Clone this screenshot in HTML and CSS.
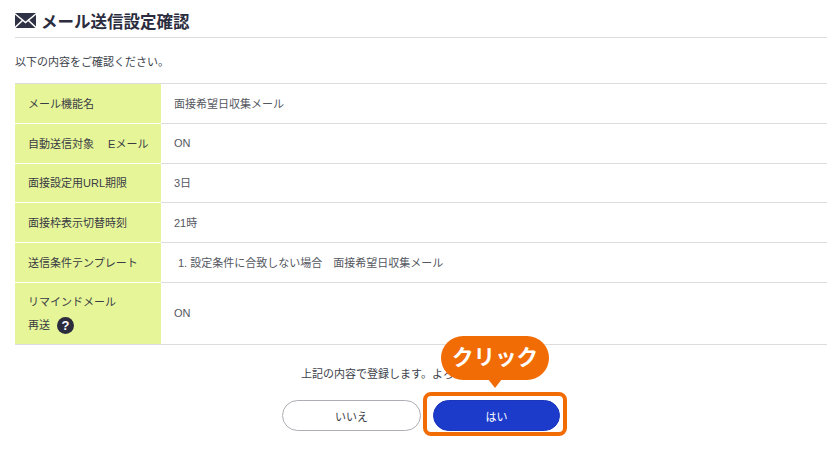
FILE: index.html
```html
<!DOCTYPE html>
<html lang="ja">
<head>
<meta charset="utf-8">
<title>メール送信設定確認</title>
<link rel="stylesheet" href="styles.css">
</head>
<body>
<main class="page">
  <h1 class="title">
    <svg class="mail" viewBox="0 0 21 15" aria-hidden="true"><path d="M0 0h21L10.5 8.6z"/><path d="M0 1.8v11.6l6.6-6.2z"/><path d="M21 1.8v11.6l-6.6-6.2z"/><path d="M7.8 8.2 10.5 10.5l2.7-2.3L20.4 15H.6z"/></svg>
    <span>メール送信設定確認</span>
  </h1>
  <p class="lead">以下の内容をご確認ください。</p>
  <table class="info">
    <tr class="r40"><th>メール機能名</th><td>面接希望日収集メール</td></tr>
    <tr class="r40"><th>自動送信対象　 Eメール</th><td>ON</td></tr>
    <tr class="r39"><th>面接設定用URL期限</th><td>3日</td></tr>
    <tr class="r40"><th>面接枠表示切替時刻</th><td>21時</td></tr>
    <tr class="r40"><th>送信条件テンプレート</th><td><span class="num">1. 設定条件に合致しない場合　面接希望日収集メール</span></td></tr>
    <tr class="r62"><th class="multi"><div class="l1">リマインドメール</div><div class="l2">再送<span class="help">?</span></div></th><td>ON</td></tr>
  </table>
  <p class="confirm">上記の内容で登録します。よろしいですか？</p>
  <div class="actions">
    <button class="btn no">いいえ</button>
    <div class="yes-wrap">
      <button class="btn yes">はい</button>
      <div class="ring"></div>
      <div class="bubble">クリック</div>
    </div>
  </div>
</main>
</body>
</html>
```
FILE: styles.css
```css
* { box-sizing: border-box; }
html, body { margin: 0; padding: 0; background: #fff; }
body {
  width: 839px; height: 449px; overflow: hidden;
  font-family: "Liberation Sans", "Noto Sans CJK JP", sans-serif;
  color: #3c3f4a;
}
.page { padding: 0 12px 0 15px; }
.title {
  display: flex; align-items: center; gap: 5px;
  height: 38px; margin: 0; padding: 4px 0 0 0;
  border-bottom: 1px solid #dcdcdc;
  font-size: 16.5px; font-weight: 700; color: #2b2d3e;
}
.mail { width: 21px; height: 15px; fill: #2f3145; flex: none; }
.lead { margin: 0; height: 45px; padding-top: 15px; font-size: 11px; line-height: 18px; }
.info { width: 812px; border-collapse: collapse; table-layout: fixed; font-size: 11px; border-top: 1px solid #dcdcdc; }
.info tr { border-bottom: 1px solid #dcdcdc; }
.r40 { height: 40px; }
.r39 { height: 39px; }
.r62 { height: 62px; }
.info th {
  width: 146px; padding: 0 0 2px 13px; background: #e6f598;
  font-weight: 400; text-align: left; color: #3a3c44;
  border-bottom: 1px solid #fff;
}
.info th.multi { padding: 2px 0 0 13px; border-bottom-color: #dcdce6; }
.info td { padding: 0 0 2px 13px; color: #55575f; }
.num { padding-left: 4px; }
.l1 { line-height: 20px; }
.l2 { display: flex; align-items: center; gap: 7px; line-height: 24px; margin-top: 1px; }
.help {
  width: 17px; height: 17px; border-radius: 50%; background: #2b2d3e; color: #fff;
  display: flex; align-items: center; justify-content: center;
  font-size: 13px; font-weight: 700; line-height: 1;
}
.confirm { margin: 0; height: 55px; padding-top: 20px; padding-left: 286px; font-size: 11px; line-height: 18px; }
.actions { display: flex; gap: 12px; padding-left: 267px; }
.btn {
  height: 31px; border-radius: 16px; font: inherit; font-size: 11px;
  padding: 0; cursor: pointer;
}
.no { width: 139px; background: #fff; border: 1px solid #aeaeb4; color: #3c3f4a; }
.yes { width: 127px; background: #1c3bcb; border: 1px solid #1a36bb; color: #fff; display: block; }
.yes-wrap { position: relative; }
.ring {
  position: absolute; left: -10px; top: -8px; width: 144px; height: 44px;
  border: 4px solid #f26c05; border-radius: 8px;
}
.bubble {
  position: absolute; left: 8px; top: -64px; width: 108px; height: 44px;
  border-radius: 22px; background: #f26c05; color: #fff;
  font-size: 21.5px; font-weight: 700; line-height: 44px; text-align: center;
}
.bubble::after {
  content: ""; position: absolute; left: 47px; top: 43px;
  border-style: solid; border-width: 9px 7px 0 7px; border-color: #f26c05 transparent transparent;
}
```
